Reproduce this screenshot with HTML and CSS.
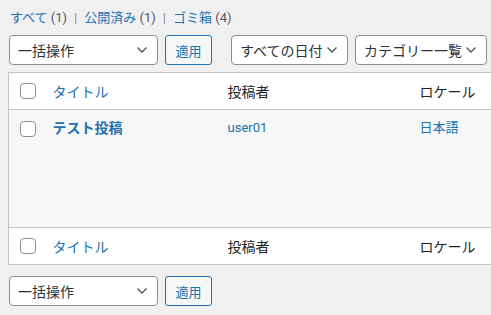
FILE: index.html
```html
<!DOCTYPE html>
<html lang="ja">
<head>
<meta charset="UTF-8">
<title>投稿一覧</title>
<link rel="stylesheet" href="styles.css">
</head>
<body>
<div class="wrap">
    <ul class="subsubsub">
        <li><a href="#">すべて</a> <span class="count">(1)</span></li>
        <li class="sep">|</li>
        <li><a href="#">公開済み</a> <span class="count">(1)</span></li>
        <li class="sep">|</li>
        <li><a href="#">ゴミ箱</a> <span class="count">(4)</span></li>
    </ul>

    <div class="tablenav top">
        <div class="select bulk">一括操作
            <svg class="chev" width="12" height="8" viewBox="0 0 12 8"><polyline points="1.5,1.5 6,6 10.5,1.5" fill="none" stroke="#50575e" stroke-width="1.4"/></svg>
        </div>
        <button class="button">適用</button>
        <div class="select date">すべての日付
            <svg class="chev" width="12" height="8" viewBox="0 0 12 8"><polyline points="1.5,1.5 6,6 10.5,1.5" fill="none" stroke="#50575e" stroke-width="1.4"/></svg>
        </div>
        <div class="select cat">カテゴリー一覧
            <svg class="chev" width="12" height="8" viewBox="0 0 12 8"><polyline points="1.5,1.5 6,6 10.5,1.5" fill="none" stroke="#50575e" stroke-width="1.4"/></svg>
        </div>
    </div>

    <table class="posts">
        <thead>
            <tr>
                <td class="check"><span class="cb"></span></td>
                <th class="col-title"><a href="#">タイトル</a></th>
                <th class="col-author">投稿者</th>
                <th class="col-locale">ロケール</th>
            </tr>
        </thead>
        <tbody>
            <tr>
                <td class="check"><span class="cb"></span></td>
                <td class="col-title"><a class="row-title" href="#">テスト投稿</a></td>
                <td class="col-author"><a href="#">user01</a></td>
                <td class="col-locale"><a href="#">日本語</a></td>
            </tr>
        </tbody>
        <tfoot>
            <tr>
                <td class="check"><span class="cb"></span></td>
                <th class="col-title"><a href="#">タイトル</a></th>
                <th class="col-author">投稿者</th>
                <th class="col-locale">ロケール</th>
            </tr>
        </tfoot>
    </table>

    <div class="tablenav bottom">
        <div class="select bulk">一括操作
            <svg class="chev" width="12" height="8" viewBox="0 0 12 8"><polyline points="1.5,1.5 6,6 10.5,1.5" fill="none" stroke="#50575e" stroke-width="1.4"/></svg>
        </div>
        <button class="button">適用</button>
    </div>
</div>
</body>
</html>
```

FILE: styles.css
```css
* {
    margin: 0;
    padding: 0;
    box-sizing: border-box;
}

html, body {
    overflow: hidden;
}

body {
    background: #f0f0f1;
    color: #2c3338;
    font-family: Roboto, "Noto Sans CJK JP", sans-serif;
    font-size: 13px;
}

a {
    color: #2271b1;
    text-decoration: none;
}

.wrap {
    width: 560px;
    padding: 8px 0 0 8px;
}

.subsubsub {
    list-style: none;
    display: flex;
    gap: 7px;
    height: 19px;
    line-height: 19px;
    padding-left: 2px;
    color: #50575e;
}

.subsubsub .sep {
    color: #8c8f94;
}

.tablenav {
    display: flex;
    align-items: center;
    height: 30px;
}

.tablenav.top {
    margin-top: 8px;
    margin-bottom: 7px;
    padding-left: 1px;
}

.tablenav.bottom {
    margin-top: 11px;
    padding-left: 1px;
}

.select {
    display: flex;
    align-items: center;
    justify-content: space-between;
    height: 30px;
    background: #fff;
    border: 1px solid #8c8f94;
    border-radius: 4px;
    font-size: 14px;
    color: #2c3338;
    padding: 0 9px 0 8px;
}

.select .chev {
    flex: none;
}

.bulk {
    width: 149px;
}

.date {
    width: 117px;
    margin-left: 19px;
}

.cat {
    width: 132px;
    margin-left: 7px;
}

.button {
    height: 30px;
    width: 47px;
    margin-left: 7px;
    background: #f6f7f7;
    border: 1px solid #2271b1;
    border-radius: 3px;
    color: #2271b1;
    font-family: inherit;
    font-size: 13px;
}

.posts {
    width: 560px;
    border: 1px solid #c3c4c7;
    border-collapse: collapse;
    background: #fff;
    table-layout: fixed;
}

.posts th,
.posts td {
    text-align: left;
    font-weight: normal;
    padding: 0 10px;
    vertical-align: middle;
}

.posts thead tr,
.posts tfoot tr {
    height: 37px;
}

.posts thead th,
.posts thead td {
    border-bottom: 1px solid #c3c4c7;
}

.posts tfoot th,
.posts tfoot td {
    border-top: 1px solid #c3c4c7;
}

.posts th {
    font-size: 14px;
    color: #1d2327;
}

.posts tbody tr {
    height: 118px;
    background: #f6f7f7;
}

.posts tbody td {
    vertical-align: top;
    padding-top: 9px;
    line-height: 18px;
    font-size: 13px;
}

.check {
    width: 34px;
}

.posts td.check {
    padding: 0 0 0 11px;
}

.posts tbody td.check {
    padding-top: 11px;
}

.col-title {
    width: 175px;
}

.col-author {
    width: 192px;
}

.cb {
    display: block;
    width: 16px;
    height: 16px;
    background: #fff;
    border: 1px solid #8c8f94;
    border-radius: 4px;
}

.row-title {
    font-size: 14px;
    font-weight: 600;
}
```
